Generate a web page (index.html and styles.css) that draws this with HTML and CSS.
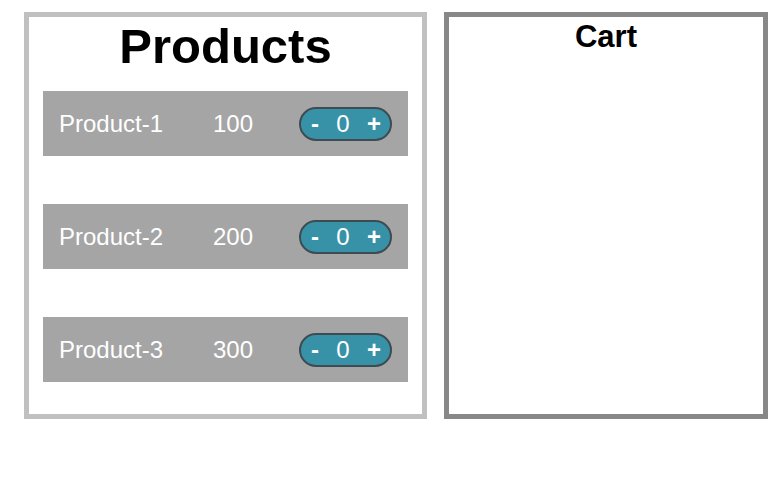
FILE: index.html
```html
<!DOCTYPE html>
<html>
<head>
<meta charset="utf-8">
<link rel="stylesheet" href="styles.css">
</head>
<body>
<div class="layout">
  <section class="products">
    <h1 class="products-title">Products</h1>
    <div class="list">
      <div class="row">
        <span class="name">Product-1</span>
        <span class="price">100</span>
        <div class="counter"><span class="btn">-</span><span class="qty">0</span><span class="btn">+</span></div>
      </div>
      <div class="row">
        <span class="name">Product-2</span>
        <span class="price">200</span>
        <div class="counter"><span class="btn">-</span><span class="qty">0</span><span class="btn">+</span></div>
      </div>
      <div class="row">
        <span class="name">Product-3</span>
        <span class="price">300</span>
        <div class="counter"><span class="btn">-</span><span class="qty">0</span><span class="btn">+</span></div>
      </div>
    </div>
  </section>
  <section class="cart">
    <h2 class="cart-title">Cart</h2>
  </section>
</div>
</body>
</html>
```

FILE: styles.css
```css
* { box-sizing: border-box; }
body {
  margin: 8px;
  font-family: "Liberation Sans", Arial, sans-serif;
  background: #fff;
}
.layout {
  display: flex;
  gap: 17px;
  margin: 4px 0 0 16px;
}
.products {
  width: 403px;
  height: 407px;
  border: 5px solid #c0c0c0;
  padding: 0 14px;
}
.products-title {
  margin: 2px 0 17px;
  font-size: 49px;
  line-height: 55px;
  font-weight: bold;
  text-align: center;
  color: #000;
}
.list {
  display: flex;
  flex-direction: column;
  gap: 48px;
}
.row {
  height: 65px;
  background: #a5a5a5;
  display: flex;
  align-items: center;
  justify-content: space-between;
  padding: 0 16px;
  color: #fff;
  font-size: 24px;
}
.price { margin-left: 4px; }
.counter {
  width: 93px;
  height: 34px;
  border: 2px solid #3e4b51;
  border-radius: 17px;
  background: #3892a7;
  display: flex;
  align-items: center;
  justify-content: space-between;
  padding: 0 9px 0 10px;
  color: #fff;
  font-size: 24px;
}
.btn { font-weight: bold; }
.cart {
  width: 324px;
  height: 407px;
  border: 5px solid #888888;
}
.cart-title {
  margin: 2px 0 0;
  font-size: 31px;
  font-weight: bold;
  text-align: center;
  color: #000;
}
```
